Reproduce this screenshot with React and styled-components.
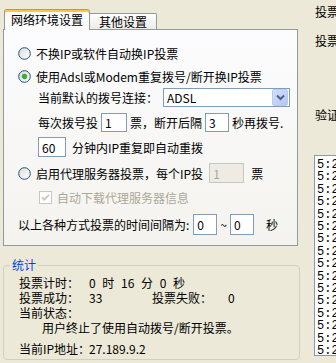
import styled, { createGlobalStyle } from 'styled-components';

const Global = createGlobalStyle`
  html, body { margin: 0; padding: 0; overflow: hidden; }
  body {
    background: #ECE9D8;
    font-family: "Noto Sans CJK SC", sans-serif;
    font-size: 12px;
    color: #000;
  }
`;

const Page = styled.div`
  display: flex;
  width: 336px;
  height: 363px;
  overflow: hidden;
`;

const Left = styled.div`
  flex: none;
  width: 297px;
  padding: 9px 0 0 3px;
`;

const TabStrip = styled.div`
  position: relative;
  z-index: 1;
  display: flex;
  align-items: flex-end;
  height: 21px;
  padding-left: 1px;
  margin-bottom: -1px;
`;

const Tab = styled.div`
  box-sizing: border-box;
  display: flex;
  align-items: center;
  justify-content: center;
  border: 1px solid #919B9C;
  border-bottom: none;
  ${(p) => p.$active ? `
    width: 86px;
    height: 21px;
    padding-bottom: 2px;
    background: #FCFCFE;
    border-top: 1px solid #E68B2C;
    box-shadow: inset 0 2px 0 #FFC73C;
    border-radius: 3px 3px 0 0;
  ` : `
    width: 67px;
    height: 16px;
    margin-bottom: 1px;
    border-left: none;
    background: linear-gradient(#FFFFFF, #ECEBE6);
    border-radius: 0 2px 0 0;
  `}
`;

const Panel = styled.div`
  box-sizing: border-box;
  width: 295px;
  height: 217px;
  padding-top: 12px;
  border: 1px solid #919B9C;
  background: linear-gradient(#FCFCFE, #F4F3EE);
`;

const Row = styled.div`
  display: flex;
  align-items: center;
  white-space: nowrap;
  height: ${(p) => p.$h}px;
  margin-top: ${(p) => p.$mt || 0}px;
  padding-left: ${(p) => p.$indent}px;
`;

const Text = styled.span`
  margin-left: ${(p) => p.$ml || 0}px;
  color: ${(p) => (p.$muted ? '#ACA899' : '#000')};
`;

const Field = styled.input`
  box-sizing: border-box;
  width: ${(p) => p.$w}px;
  height: ${(p) => p.$h || 19}px;
  margin: 0 0 0 ${(p) => p.$ml || 0}px;
  padding: 0 3px;
  border: 1px solid #7F9DB9;
  background: #fff;
  font: inherit;
  color: #000;
  outline: none;

  &:disabled {
    border-color: #C9C7BA;
    background: #EDEBE3;
    color: #ACA899;
  }
`;

const SelectBox = styled.div`
  box-sizing: border-box;
  display: flex;
  align-items: center;
  width: 127px;
  height: 19px;
  margin-left: 5px;
  border: 1px solid #7F9DB9;
  background: #fff;
`;

const SelectValue = styled.span`
  flex: 1;
  padding-left: 3px;
`;

const DropButton = styled.div`
  box-sizing: border-box;
  display: flex;
  align-items: center;
  justify-content: center;
  width: 16px;
  height: 17px;
  margin-right: 1px;
  border: 1px solid #B9CBF3;
  border-radius: 2px;
  background: linear-gradient(135deg, #D2DEFB, #B3C7F4);
`;

const Mark = styled.svg`
  flex: none;
  margin-right: 5px;
`;

const Radio = ({ checked }) => (
  <Mark width="13" height="13" viewBox="0 0 13 13">
    <defs>
      <linearGradient id="radioFill" x1="0" y1="0" x2="1" y2="1">
        <stop offset="0" stopColor="#DCDCD7" />
        <stop offset="1" stopColor="#FFFFFF" />
      </linearGradient>
    </defs>
    <circle cx="6.5" cy="6.5" r="5.8" fill="url(#radioFill)" stroke="#1C5180" strokeWidth="1" />
    {checked && <circle cx="6.5" cy="6.5" r="2.4" fill="#3AAE3A" stroke="#21A121" strokeWidth="0.6" />}
  </Mark>
);

const Check = () => (
  <Mark width="13" height="13" viewBox="0 0 13 13">
    <rect x="0.5" y="0.5" width="12" height="12" fill="#FFFFFF" stroke="#CAC8BB" />
    <path d="M3 6.2 L5.3 8.6 L10 3.8" fill="none" stroke="#CAC8BB" strokeWidth="1.8" />
  </Mark>
);

const Group = styled.fieldset`
  box-sizing: border-box;
  width: 297px;
  margin: 12px 0 0 0;
  padding: 0 6px 3px 6px;
  border: 1px solid #D0D0BF;
  border-radius: 4px;
`;

const GroupTitle = styled.legend`
  padding: 0 2px;
  line-height: 14px;
  color: #0046D5;
`;

const Stats = styled.div`
  padding: 3px 0 0 9px;
`;

const StatLine = styled.div`
  display: flex;
  white-space: nowrap;
  line-height: ${(p) => p.$lh || 15}px;
  margin-top: ${(p) => p.$mt || 0}px;
  padding-left: ${(p) => p.$indent || 0}px;
`;

const Cell = styled.span`
  width: ${(p) => p.$w}px;
  flex: none;
  word-spacing: ${(p) => p.$ws || 0}px;
`;

const Right = styled.div`
  flex: none;
  display: flex;
  flex-direction: column;
  width: 60px;
  margin-left: 13px;
  padding-top: 5px;
`;

const SideLabel = styled.div`
  line-height: 14px;
  padding-left: 2px;
  margin-top: ${(p) => p.$mt || 0}px;
  white-space: nowrap;
`;

const LogList = styled.div`
  box-sizing: border-box;
  height: 201px;
  margin: 33px 0 0 1px;
  padding: 3px 2px;
  border: 1px solid #7F9DB9;
  background: #fff;
  font-family: "Liberation Mono", monospace;
  font-size: 12px;
  line-height: 12.4px;
  white-space: nowrap;
  overflow: hidden;
`;

const logs = [
  '5:20:41 拨号成功', '5:20:43 获取IP', '5:20:45 投票成功', '5:21:02 断开连接',
  '5:21:06 拨号成功', '5:21:08 获取IP', '5:21:10 投票成功', '5:21:27 断开连接',
  '5:21:31 拨号成功', '5:21:33 获取IP', '5:21:35 投票成功', '5:21:52 断开连接',
  '5:21:56 拨号成功', '5:21:58 获取IP', '5:22:00 投票成功', '5:22:17 断开连接',
];

export default function App() {
  return (
    <Page>
      <Global />
      <Left>
        <TabStrip>
          <Tab $active>网络环境设置</Tab>
          <Tab>其他设置</Tab>
        </TabStrip>
        <Panel>
          <Row $h={22} $indent={14}>
            <Radio />
            <Text>不换IP或软件自动换IP投票</Text>
          </Row>
          <Row $h={24} $indent={14}>
            <Radio checked />
            <Text>使用Adsl或Modem重复拨号/断开换IP投票</Text>
          </Row>
          <Row $h={19} $indent={34}>
            <Text>当前默认的拨号连接：</Text>
            <SelectBox>
              <SelectValue>ADSL</SelectValue>
              <DropButton>
                <svg width="9" height="7" viewBox="0 0 9 7">
                  <path d="M1 1.5 L4.5 5 L8 1.5" fill="none" stroke="#4D6185" strokeWidth="2" />
                </svg>
              </DropButton>
            </SelectBox>
          </Row>
          <Row $h={19} $mt={6} $indent={34}>
            <Text>每次拨号投</Text>
            <Field $w={26} $ml={3} value="1" readOnly />
            <Text $ml={3}>票，断开后隔</Text>
            <Field $w={24} $ml={3} value="3" readOnly />
            <Text $ml={3}>秒再拨号.</Text>
          </Row>
          <Row $h={20} $mt={5} $indent={34}>
            <Field $w={28} $h={20} value="60" readOnly />
            <Text $ml={6}>分钟内IP重复即自动重拨</Text>
          </Row>
          <Row $h={20} $mt={6} $indent={14}>
            <Radio />
            <Text>启用代理服务器投票，每个IP投</Text>
            <Field $w={35} $h={20} $ml={6} value="1" disabled />
            <Text $ml={7}>票</Text>
          </Row>
          <Row $h={28} $indent={35}>
            <Check />
            <Text $muted>自动下载代理服务器信息</Text>
          </Row>
          <Row $h={21} $mt={3} $indent={14}>
            <Text>以上各种方式投票的时间间隔为:</Text>
            <Field $w={24} $h={21} $ml={4} value="0" readOnly />
            <Text $ml={3}>~</Text>
            <Field $w={24} $h={21} $ml={3} value="0" readOnly />
            <Text $ml={12}>秒</Text>
          </Row>
        </Panel>
        <Group>
          <GroupTitle>统计</GroupTitle>
          <Stats>
            <StatLine>
              <Cell $w={70}>投票计时：</Cell>
              <Cell $w={120} $ws={4}>0 时 16 分 0 秒</Cell>
            </StatLine>
            <StatLine>
              <Cell $w={70}>投票成功：</Cell>
              <Cell $w={63}>33</Cell>
              <Cell $w={76}>投票失败：</Cell>
              <Cell $w={30}>0</Cell>
            </StatLine>
            <StatLine>当前状态：</StatLine>
            <StatLine $lh={16} $indent={23}>用户终止了使用自动拨号/断开投票。</StatLine>
            <StatLine $mt={5}>
              <Cell $w={70}>当前IP地址：</Cell>
              <Cell $w={100}>27.189.9.2</Cell>
            </StatLine>
          </Stats>
        </Group>
      </Left>
      <Right>
        <SideLabel>投票</SideLabel>
        <SideLabel $mt={15}>投票</SideLabel>
        <SideLabel $mt={60}>验证</SideLabel>
        <LogList>
          {logs.map((line, i) => (
            <div key={i}>{line}</div>
          ))}
        </LogList>
      </Right>
    </Page>
  );
}
